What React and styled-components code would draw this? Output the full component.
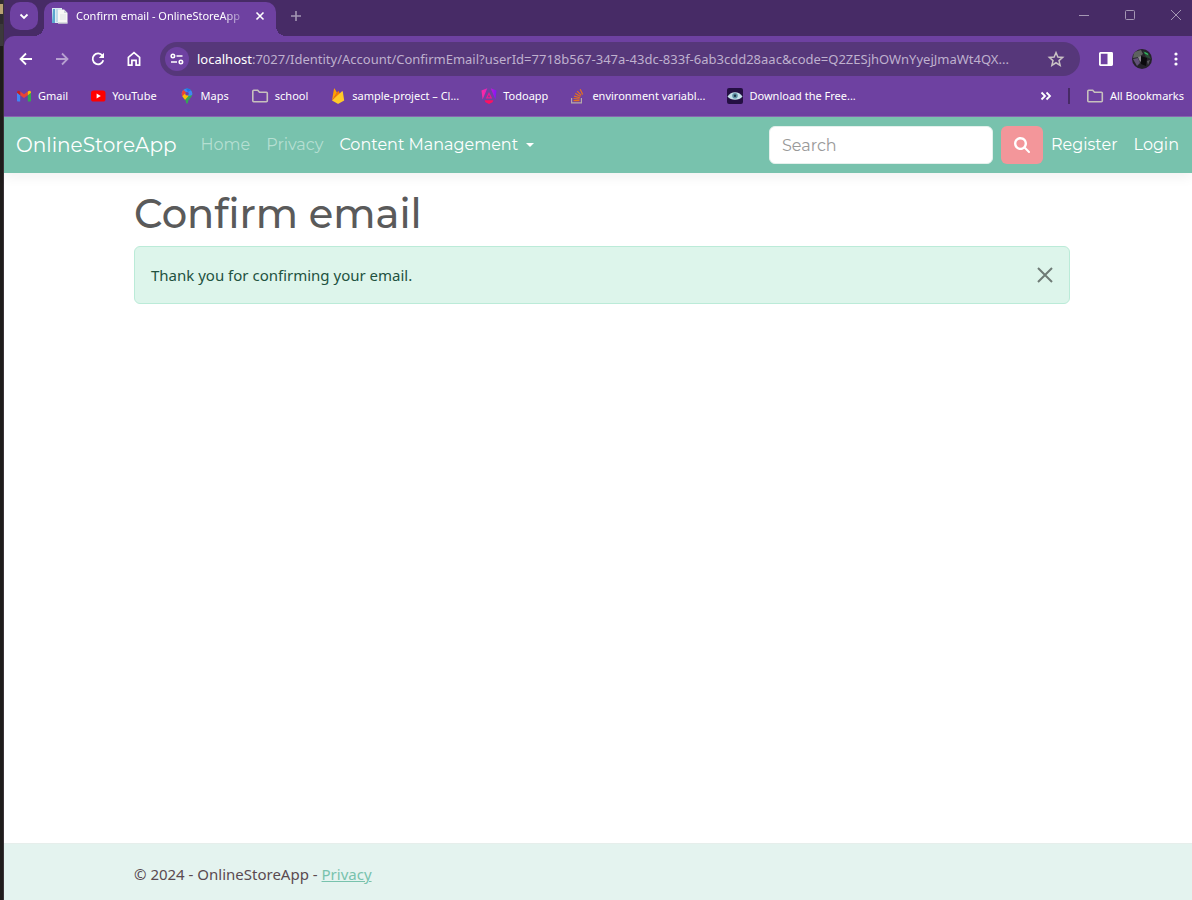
import React from 'react';
import styled, { createGlobalStyle, css } from 'styled-components';

const system = '"Segoe UI", "Noto Sans", "Open Sans", sans-serif';
const display = 'Montserrat, Inter, sans-serif';

const GlobalStyle = createGlobalStyle`
  *, *::before, *::after { box-sizing: border-box; }
  body { margin: 0; background: #fff; font-family: ${system}; }
  button, input { font: inherit; }
  svg { display: block; flex: none; }
`;

const Screen = styled.div`
  display: flex;
  min-height: 100vh;
`;

const DesktopEdge = styled.div`
  flex: none;
  width: 4px;
  background: linear-gradient(#302c30 0 4px, #b9a272 4px 14px, #302c30 14px 24px, #3c3a3c 24px 46px, #1f1c1b 46px);
  border-right: 1px solid #3a3338;
`;

const BrowserWindow = styled.div`
  flex: 1;
  min-width: 0;
  display: flex;
  flex-direction: column;
`;

const bare = css`
  border: 0;
  padding: 0;
  background: none;
  color: inherit;
  cursor: pointer;
  display: flex;
  align-items: center;
  justify-content: center;
  flex: none;
`;

const IconButton = styled.button`
  ${bare}
  width: ${(p) => p.$size || 36}px;
  height: ${(p) => p.$height || p.$size || 36}px;
  opacity: ${(p) => (p.$dim ? 0.5 : 1)};
`;

/* Tab strip */
const TabStrip = styled.div`
  display: flex;
  height: 36px;
  padding: 2px 0 0 6px;
  background: #472b66;
  color: #fff;
`;

const TabSearch = styled.button`
  ${bare}
  width: 28px;
  height: 28px;
  border-radius: 10px;
  background: #6e41a1;
`;

const Tab = styled.div`
  position: relative;
  display: flex;
  align-items: center;
  width: 232px;
  height: 34px;
  margin-left: 6px;
  padding: 0 6px 6px 8px;
  border-radius: 10px 10px 0 0;
  background: #6e41a1;

  &::before, &::after {
    content: '';
    position: absolute;
    bottom: 0;
    width: 10px;
    height: 10px;
  }
  &::before {
    right: 100%;
    background: radial-gradient(circle at 0 0, transparent 10px, #6e41a1 10px);
  }
  &::after {
    left: 100%;
    background: radial-gradient(circle at 100% 0, transparent 10px, #6e41a1 10px);
  }
`;

const TabTitle = styled.span`
  flex: 1;
  min-width: 0;
  margin-left: 8px;
  overflow: hidden;
  white-space: nowrap;
  font-size: 11px;
  line-height: 16px;
  mask-image: linear-gradient(to right, #000 calc(100% - 28px), transparent);
`;

const WindowControls = styled.div`
  display: flex;
  gap: 14px;
  margin-left: auto;
  color: #a597b4;
`;

/* Toolbar */
const ToolbarFrame = styled.div`
  background: #472b66;
`;

const Toolbar = styled.div`
  display: flex;
  align-items: center;
  height: 46px;
  padding: 0 0 0 4px;
  border-radius: 10px 0 0 0;
  background: #6e41a1;
  color: #fff;
`;

const AddressBar = styled.div`
  flex: 1;
  min-width: 0;
  display: flex;
  align-items: center;
  height: 34px;
  margin: 0 8px;
  padding: 0 6px 0 5px;
  border-radius: 17px;
  background: #56377a;
`;

const SiteInfo = styled.button`
  ${bare}
  width: 24px;
  height: 24px;
  border-radius: 50%;
  background: #6e41a1;
`;

const Url = styled.div`
  flex: 1;
  min-width: 0;
  margin: 0 0 0 8px;
  white-space: nowrap;
  overflow: hidden;
  font-size: 13px;
  line-height: 20px;
  color: #bfb1ce;
  b { font-weight: 400; color: #fff; }
`;

const Avatar = styled.span`
  display: block;
  width: 20px;
  height: 20px;
  border-radius: 50%;
  overflow: hidden;
`;

/* Bookmarks */
const BookmarksBar = styled.nav`
  display: flex;
  align-items: center;
  gap: 22px;
  height: 35px;
  padding: 0 8px 6px 12px;
  background: #6e41a1;
  border-bottom: 1px solid #8a66b2;
  color: #fff;
`;

const BookmarkLink = styled.a`
  display: flex;
  align-items: center;
  gap: 6px;
  flex: none;
  color: inherit;
  text-decoration: none;
  white-space: nowrap;
  font-size: 11px;
  line-height: 16px;
`;

const BookmarkTail = styled.div`
  display: flex;
  align-items: center;
  gap: 12px;
  margin-left: auto;
`;

const Divider = styled.span`
  width: 2px;
  height: 16px;
  margin-right: 4px;
  background: #472b66;
`;

/* Web page */
const Navbar = styled.header`
  display: flex;
  align-items: center;
  height: 56px;
  padding: 0 5px 0 12px;
  background: #78c2ad;
  box-shadow: 0 4px 12px rgba(0, 0, 0, 0.06);
  font-family: ${display};
  font-size: 16px;
  line-height: 24px;
`;

const Brand = styled.a`
  margin-right: 16px;
  color: #fff;
  font-size: 20px;
  line-height: 30px;
  text-decoration: none;
`;

const NavLink = styled.a`
  display: flex;
  align-items: center;
  padding: 8px;
  white-space: nowrap;
  text-decoration: none;
  color: ${(p) => (p.$active ? '#fff' : '#b5dfd2')};
`;

const Caret = styled.span`
  margin-left: 8px;
  border: 4px solid transparent;
  border-top-color: #fff;
  border-bottom: 0;
`;

const SearchForm = styled.form`
  display: flex;
  gap: 8px;
  margin-left: auto;
`;

const SearchInput = styled.input`
  width: 224px;
  height: 38px;
  padding: 6px 12px;
  border: 1px solid #e4f0ec;
  border-radius: 6px;
  background: #fff;
  color: #5a5a5a;
  &::placeholder { color: #999; opacity: 1; }
`;

const SearchButton = styled.button`
  ${bare}
  width: 42px;
  height: 38px;
  border-radius: 6px;
  background: #f3969a;
  color: #fff;
`;

const Main = styled.main`
  flex: 1;
  padding: 17px 12px 16px 20px;
`;

const Container = styled.div`
  max-width: 936px;
  margin: 0 auto;
`;

const Title = styled.h1`
  margin: 0 0 8px;
  color: #5a5a5a;
  font-family: ${display};
  font-weight: 500;
  font-size: 40px;
  line-height: 48px;
`;

const Alert = styled.div`
  display: flex;
  align-items: center;
  justify-content: space-between;
  min-height: 58px;
  padding: 0 16px;
  border: 1px solid #bbebd8;
  border-radius: 6px;
  background: #ddf5eb;
  color: #22523f;
  font-size: 15px;
  line-height: 24px;
`;

const AlertClose = styled.button`
  ${bare}
  color: #6f7b76;
`;

const Footer = styled.footer`
  padding: 19px 12px 15px 20px;
  background: #e4f3ef;
  border-top: 1px solid #e6eeeb;
  color: #5a4a50;
  font-size: 15px;
  line-height: 22px;
  a { color: #78c2ad; }
`;

const stroke = (d, size = 16, width = 2, color = 'currentColor') => (
  <svg width={size} height={size} viewBox="0 0 16 16" fill="none" stroke={color} strokeWidth={width} aria-hidden="true">
    <path d={d} />
  </svg>
);

const Favicon = () => (
  <svg width="16" height="16" viewBox="0 0 16 16" aria-hidden="true">
    <path d="M0 0h10v15H0z" fill="#dcebf3" />
    <path d="M1 1h2v14H0z" fill="#5aa7cf" />
    <path d="M4 1h6v13H4z" fill="#bfdbe9" />
    <path d="M6 1.500h6l3.500 3.500v10.500H6z" fill="#f7f7f5" />
    <path d="M12 1.500V5h3.500z" fill="#cfd6da" />
    <path d="M8 7h6M8 9h6M8 11h6" stroke="#dfe3e5" />
    <path d="M6 15h9.500" stroke="#b9c1c6" />
  </svg>
);

const HomeIcon = () => (
  <svg width="16" height="16" viewBox="0 0 16 16" fill="none" stroke="currentColor" strokeWidth="1.7" aria-hidden="true">
    <path d="M2.400 6.300 8 1.700l5.600 4.600v7.900h-3.500V9.400H5.900v4.800H2.400z" />
  </svg>
);

const ReloadIcon = () => (
  <svg width="16" height="16" viewBox="0 0 16 16" fill="none" aria-hidden="true">
    <path d="M12.400 4.600A5.400 5.400 0 1 0 13.300 9.300" stroke="currentColor" strokeWidth="1.8" />
    <path d="M14 1.800V7H8.800z" fill="currentColor" />
  </svg>
);

const TuneIcon = () => (
  <svg width="14" height="12" viewBox="0 0 14 12" fill="none" stroke="#fff" strokeWidth="1.6" aria-hidden="true">
    <circle cx="2.9" cy="3" r="1.7" />
    <path d="M6.500 3H12.500M1 9H7" />
    <circle cx="10.9" cy="9" r="1.700" />
  </svg>
);

const StarIcon = () => (
  <svg width="18" height="18" viewBox="0 0 24 24" fill="none" stroke="#c9c2c4" strokeWidth="2" aria-hidden="true">
    <path d="m12 3.400 2.500 5.900 6.400.6-4.900 4.200 1.500 6.300L12 17l-5.500 3.400L8 14.100 3.100 9.900l6.400-.6z" />
  </svg>
);

const AvatarArt = () => (
  <svg width="20" height="20" viewBox="0 0 20 20" aria-hidden="true">
    <path d="M0 0h20v20H0z" fill="#25232a" />
    <path d="M2 3l7-2 2 4-4 3-6 1z" fill="#5d625f" />
    <path d="M1 10l5-1 2 5-3 3z" fill="#615078" />
    <path d="M6 8l3-1 1 4-2 2z" fill="#8a8790" />
    <path d="M11 2l5 2 3 6-5-2z" fill="#2c4a38" />
    <path d="M9 7l6 2-1 8-5-2z" fill="#0b0a0d" />
    <path d="M15 12l3-1-2 5z" fill="#5a5960" />
    <path d="M12.500 3.500l3.500 2" stroke="#2fc763" strokeWidth="1.200" />
  </svg>
);

const FolderIcon = () => (
  <svg width="18" height="16" viewBox="0 0 18 16" fill="none" stroke="#c7c1bd" strokeWidth="1.600" aria-hidden="true">
    <path d="M1.800 3.200c0-.5.300-.9.900-.9h4l1.800 2h6.900c.5 0 .9.300.9.900v7.600c0 .5-.4.900-.9.900H2.700c-.5 0-.9-.4-.9-.9z" />
  </svg>
);

const GmailIcon = () => (
  <svg width="16" height="16" viewBox="0 0 16 16" aria-hidden="true">
    <path d="M1 4.500 4.200 7v6.500H2c-.6 0-1-.4-1-1z" fill="#4285f4" />
    <path d="M15 4.500 11.800 7v6.500H14c.6 0 1-.4 1-1z" fill="#34a853" />
    <path d="M4.200 3.400 8 6.300l3.800-2.900v3.800L8 10.100 4.200 7.200z" fill="#ea4335" />
    <path d="M1 4.300C1 2.600 2.700 2.200 4.200 3.400v3.800L1 4.800z" fill="#c5221f" />
    <path d="M15 4.300c0-1.700-1.700-2.100-3.200-.9v3.800L15 4.800z" fill="#fbbc04" />
  </svg>
);

const YouTubeIcon = () => (
  <svg width="16" height="16" viewBox="0 0 16 16" aria-hidden="true">
    <rect x="1" y="2.500" width="14.500" height="11" rx="2.600" fill="#f00" />
    <path d="M6.600 5.600v4.800L10.800 8z" fill="#fff" />
  </svg>
);

const MapsIcon = () => (
  <svg width="16" height="16" viewBox="0 0 16 16" aria-hidden="true">
    <clipPath id="pin">
      <path d="M8 .5A5.300 5.300 0 0 0 2.700 5.800c0 3.900 4.100 5 4.500 9.100.1.800 1.500.8 1.600 0 .4-4.100 4.500-5.200 4.500-9.100A5.300 5.300 0 0 0 8 .5z" />
    </clipPath>
    <g clipPath="url(#pin)">
      <path d="M0 0h16v16H0z" fill="#34a853" />
      <path d="M0 0h16v4L9 8 2 9z" fill="#4285f4" />
      <path d="M6.500 0H16L9 4z" fill="#1a73e8" />
      <path d="M0 2h4.500L8 5 3 9z" fill="#ea4335" />
      <path d="M2 9.500 6.500 5 9.500 8 5 13z" fill="#fbbc04" />
      <path d="M9 8l5-5v4z" fill="#4285f4" />
    </g>
    <circle cx="8" cy="5.800" r="1.800" fill="#6e41a1" />
  </svg>
);

const FirebaseIcon = () => (
  <svg width="16" height="16" viewBox="0 0 16 16" aria-hidden="true">
    <path d="M2 12.500 4 .800c.1-.4.500-.4.700-.1L7 4.700z" fill="#ffa000" />
    <path d="M2 12.500 8 3.200c.2-.4.500-.4.700 0L10.500 7z" fill="#f57c00" />
    <path d="m2 12.500 10-9.200c.3-.3.700-.1.800.2l1.400 9-5.300 3.100c-.5.300-1.100.3-1.600 0z" fill="#ffca28" />
  </svg>
);

const AngularIcon = () => (
  <svg width="16" height="16" viewBox="0 0 16 16" aria-hidden="true">
    <defs>
      <linearGradient id="ng" gradientUnits="userSpaceOnUse" x1="0" y1="0" x2="16" y2="0">
        <stop offset="0" stopColor="#ff2c9c" />
        <stop offset=".5" stopColor="#e01ac8" />
        <stop offset="1" stopColor="#7416ff" />
      </linearGradient>
    </defs>
    <path d="M.5 2.500 6.300.300 1.600 11.500zM15.500 2.500 9.700.300l4.700 11.200z" fill="url(#ng)" />
    <path d="M8 4 4.800 10.600h6.400zM8 6.800l1.200 2.400H6.800z" fill="#f0188f" fillRule="evenodd" />
    <path d="M3.600 12.300h8.800l-.9 2L8 16l-3.500-1.700z" fill="#ff1060" />
  </svg>
);

const StackIcon = () => (
  <svg width="16" height="16" viewBox="0 0 16 16" fill="none" strokeWidth="1.200" aria-hidden="true">
    <path d="M1.600 10v4.800h9.800V10" stroke="#b5a9a9" />
    <path d="M3.500 12.700h6M3.600 10.500l6 .7M4.100 8.100l5.700 1.700M5.300 5.600l5.200 2.900M7.200 3.200l4.100 4.100M10.200 1.200l2.500 5.200" stroke="#e8711c" />
  </svg>
);

const EyeIcon = () => (
  <svg width="16" height="16" viewBox="0 0 16 16" aria-hidden="true">
    <rect width="16" height="16" rx="2" fill="#240f43" />
    <path d="M.5 8.500C4 2.800 12 2.800 15.500 8.500 12 12.800 4 12.800.5 8.500z" fill="#c3e1ea" />
    <circle cx="8" cy="7.800" r="2.800" fill="#5f93a7" />
    <circle cx="8" cy="7.800" r="1.200" fill="#1d3348" />
  </svg>
);

const bookmarks = [
  ['Gmail', GmailIcon],
  ['YouTube', YouTubeIcon],
  ['Maps', MapsIcon],
  ['school', FolderIcon],
  ['sample-project – Cl...', FirebaseIcon],
  ['Todoapp', AngularIcon],
  ['environment variabl...', StackIcon],
  ['Download the Free...', EyeIcon],
];

export default function App() {
  return (
    <Screen>
      <GlobalStyle />
      <DesktopEdge />
      <BrowserWindow>
        <TabStrip>
          <TabSearch aria-label="Search tabs">{stroke('M4.500 6.500 8 10l3.500-3.500', 16, 1.8)}</TabSearch>
          <Tab>
            <Favicon />
            <TabTitle>Confirm email - OnlineStoreApp</TabTitle>
            <IconButton $size={20} aria-label="Close tab">{stroke('M4.500 4.500l7 7M11.500 4.500l-7 7', 16, 1.6)}</IconButton>
          </Tab>
          <IconButton $size={40} $height={28} $dim aria-label="New tab">{stroke('M8 3v10M3 8h10', 16, 1.6)}</IconButton>
          <WindowControls>
            <IconButton $size={32} $height={26} aria-label="Minimize">{stroke('M3 8.500h10', 16, 1)}</IconButton>
            <IconButton $size={32} $height={26} aria-label="Maximize">
              <svg width="16" height="16" fill="none" stroke="currentColor" aria-hidden="true"><rect x="3.500" y="3.500" width="9" height="9" rx="1" /></svg>
            </IconButton>
            <IconButton $size={32} $height={26} aria-label="Close">
              {stroke('M3 3l10 10M13 3 3 13', 16, 1)}
            </IconButton>
          </WindowControls>
        </TabStrip>

        <ToolbarFrame>
          <Toolbar>
            <IconButton aria-label="Back">{stroke('M14 8H3M8 2.500 2.500 8 8 13.500', 16, 1.8)}</IconButton>
            <IconButton $dim aria-label="Forward">{stroke('M2 8h11M8 2.500 13.500 8 8 13.500', 16, 1.8)}</IconButton>
            <IconButton aria-label="Reload"><ReloadIcon /></IconButton>
            <IconButton aria-label="Home"><HomeIcon /></IconButton>
            <AddressBar>
              <SiteInfo aria-label="Site information"><TuneIcon /></SiteInfo>
              <Url>
                <b>localhost</b>:7027/Identity/Account/ConfirmEmail?userId=7718b567-347a-43dc-833f-6ab3cdd28aac&amp;code=Q2ZESjhOWnYyejJmaWt4QX...
              </Url>
              <IconButton aria-label="Bookmark this page"><StarIcon /></IconButton>
            </AddressBar>
            <IconButton aria-label="Side panel">
              <svg width="16" height="16" fill="none" aria-hidden="true">
                <rect x="1.900" y="1.900" width="12.200" height="12.200" rx=".5" stroke="#fff" strokeWidth="1.800" />
                <path d="M9.500 2H14v12H9.500z" fill="#fff" />
              </svg>
            </IconButton>
            <IconButton aria-label="Profile"><Avatar><AvatarArt /></Avatar></IconButton>
            <IconButton $size={32} aria-label="Menu">
              <svg width="16" height="16" fill="#fff" aria-hidden="true"><circle cx="8" cy="3" r="1.600" /><circle cx="8" cy="8" r="1.600" /><circle cx="8" cy="13" r="1.600" /></svg>
            </IconButton>
          </Toolbar>
        </ToolbarFrame>

        <BookmarksBar aria-label="Bookmarks">
          {bookmarks.map(([name, Icon]) => (
            <BookmarkLink href="#" key={name}><Icon />{name}</BookmarkLink>
          ))}
          <BookmarkTail>
            <IconButton $size={20} aria-label="More bookmarks">{stroke('M3.500 4.500 7 8l-3.500 3.500M8.500 4.500 12 8l-3.500 3.500', 16, 1.8)}</IconButton>
            <Divider />
            <BookmarkLink href="#"><FolderIcon />All Bookmarks</BookmarkLink>
          </BookmarkTail>
        </BookmarksBar>

        <Navbar>
          <Brand href="#">OnlineStoreApp</Brand>
          <NavLink href="#">Home</NavLink>
          <NavLink href="#">Privacy</NavLink>
          <NavLink href="#" $active>Content Management<Caret /></NavLink>
          <SearchForm role="search" onSubmit={(e) => e.preventDefault()}>
            <SearchInput type="search" placeholder="Search" aria-label="Search" />
            <SearchButton aria-label="Submit search">
              <svg width="16" height="16" viewBox="0 0 512 512" fill="currentColor" aria-hidden="true">
                <path d="M416 208c0 45.900-14.900 88.300-40 122.700l126.600 126.700c12.500 12.500 12.500 32.800 0 45.300s-32.800 12.500-45.300 0L330.700 376c-34.400 25.200-76.800 40-122.700 40C93.100 416 0 322.900 0 208S93.100 0 208 0s208 93.100 208 208zM208 340a132 132 0 1 0 0-264 132 132 0 1 0 0 264z" />
              </svg>
            </SearchButton>
          </SearchForm>
          <NavLink href="#" $active>Register</NavLink>
          <NavLink href="#" $active>Login</NavLink>
        </Navbar>

        <Main>
          <Container>
            <Title>Confirm email</Title>
            <Alert role="alert">
              Thank you for confirming your email.
              <AlertClose aria-label="Close">{stroke('M1 1l14 14M15 1 1 15', 16, 2)}</AlertClose>
            </Alert>
          </Container>
        </Main>

        <Footer>
          <Container>© 2024 - OnlineStoreApp - <a href="#">Privacy</a></Container>
        </Footer>
      </BrowserWindow>
    </Screen>
  );
}
